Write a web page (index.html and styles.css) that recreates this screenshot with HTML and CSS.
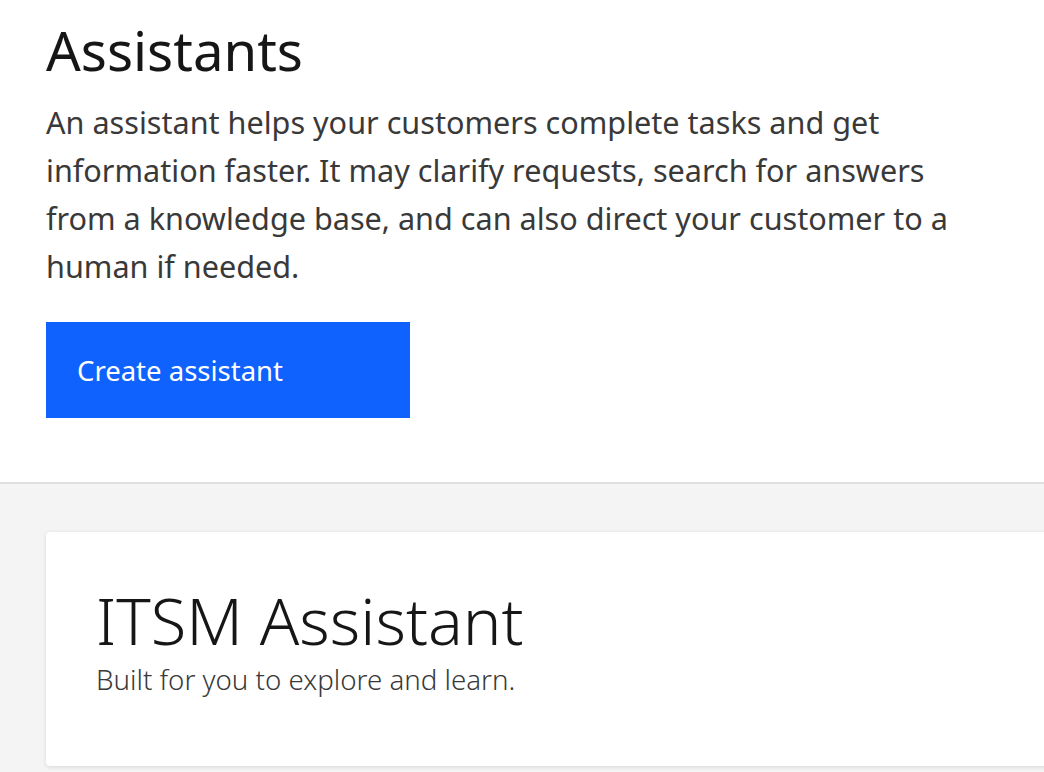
FILE: index.html
```html
<!DOCTYPE html>
<html lang="en">
<head>
<meta charset="utf-8">
<title>Assistants</title>
<link rel="stylesheet" href="styles.css">
</head>
<body>
<header class="intro">
  <h1 class="intro-title">Assistants</h1>
  <p class="intro-text">An assistant helps your customers complete tasks and get information faster. It may clarify requests, search for answers from a knowledge base, and can also direct your customer to a human if needed.</p>
  <button class="btn-primary" type="button">Create assistant</button>
</header>
<main class="list">
  <section class="card">
    <h2 class="card-title">ITSM Assistant</h2>
    <p class="card-sub">Built for you to explore and learn.</p>
  </section>
</main>
</body>
</html>
```

FILE: styles.css
```css
html, body {
  margin: 0;
  padding: 0;
  overflow: hidden;
  height: 100%;
}
body {
  font-family: "Noto Sans", "Open Sans", sans-serif;
  background: #f4f4f4;
  color: #161616;
}
.intro {
  background: #ffffff;
  padding: 14px 0 64px 46px;
  border-bottom: 2px solid #e0e0e0;
  height: 404px;
}
.intro-title {
  margin: 0;
  font-size: 54.5px;
  font-weight: 400;
  line-height: 72px;
  color: #161616;
}
.intro-text {
  margin: 12px 0 0;
  max-width: 950px;
  font-size: 30.6px;
  line-height: 48px;
  color: #393939;
}
.btn-primary {
  display: flex;
  align-items: center;
  margin-top: 32px;
  width: 364px;
  height: 96px;
  padding: 0 31px;
  border: none;
  border-radius: 0;
  background: #0f62fe;
  color: #ffffff;
  font-family: inherit;
  font-size: 27.5px;
  font-weight: 400;
  text-align: left;
}
.list {
  padding: 48px 0 0 46px;
}
.card {
  width: 1100px;
  height: 234px;
  box-sizing: border-box;
  padding: 49px 48px 0 50px;
  background: #ffffff;
  border-radius: 4px;
  box-shadow: 0 1px 4px rgba(0, 0, 0, 0.12);
}
.card-title {
  margin: 0;
  font-size: 65px;
  font-weight: 300;
  line-height: 78px;
  color: #161616;
}
.card-sub {
  margin: 0;
  padding-top: 2px;
  font-size: 27.7px;
  font-weight: 300;
  line-height: 36px;
  color: #393939;
}
```
